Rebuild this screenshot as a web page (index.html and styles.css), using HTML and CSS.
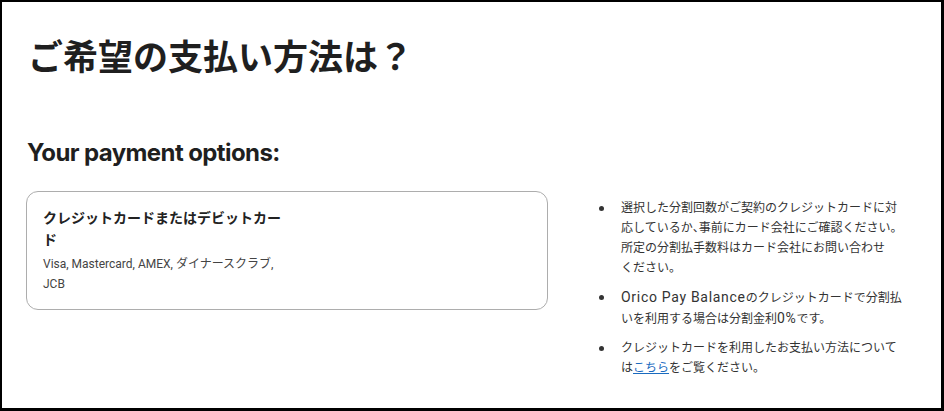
FILE: index.html
```html
<!DOCTYPE html>
<html lang="ja">
<head>
    <meta charset="UTF-8">
    <meta name="viewport" content="width=device-width, initial-scale=1.0">
    <title>お支払い方法</title>
    <link rel="stylesheet" href="styles.css">
</head>
<body>
    <div class="frame">
        <h1 class="titulo">ご希望の支払い方法は？</h1>

        <div class="colunas">
            <div class="esquerda">
                <h2 class="subtitulo">Your payment options:</h2>

                <div class="cartao">
                    <div class="cartao-texto">
                        <div class="cartao-nome">クレジットカードまたはデビットカード</div>
                        <div class="cartao-marcas">Visa, Mastercard, AMEX, ダイナースクラブ, JCB</div>
                    </div>
                </div>
            </div>

            <!-- avisos -->
            <ul class="avisos">
                <li><span>選択した分割回数がご契約のクレジットカードに対応しているか<span class="meio">、</span>事前にカード会社にご確認ください。所定の分割払手数料はカード会社にお問い合わせ<span class="junto">ください。</span></span></li>
                <li><span><span class="marca">Orico Pay Balance</span>のクレジットカードで分割払いを利用する場合は分割金利<span class="marca">0%</span>です。</span></li>
                <li><span>クレジットカードを利用したお支払い方法については<a href="#">こちら</a>をご覧ください。</span></li>
            </ul>
        </div>
    </div>
</body>
</html>
```

FILE: styles.css
```css
* {
    box-sizing: border-box;
}

body {
    margin: 0;
    background-color: white;
    color: #2b2b2b;
    font-family: Roboto, "Noto Sans CJK JP", sans-serif;
}

.frame {
    width: 944px;
    height: 411px;
    border: 2px solid black;
    border-right-width: 3px;
    border-bottom-width: 3px;
    padding-left: 24px;
    overflow: hidden;
}

.titulo {
    margin: 30px 0 0 2px;
    font-family: "Noto Sans CJK JP", sans-serif;
    font-size: 35px;
    line-height: 45px;
    font-weight: 700;
    color: #1f1f1f;
}

.colunas {
    display: flex;
    gap: 50px;
}

.esquerda {
    width: 522px;
}

.subtitulo {
    margin: 61px 0 0 1px;
    font-family: Inter, "Noto Sans CJK JP", sans-serif;
    font-size: 24px;
    line-height: 30px;
    font-weight: 700;
    letter-spacing: -0.6px;
    color: #1f1f1f;
}

.cartao {
    margin-top: 23px;
    height: 119px;
    border: 1px solid #adadad;
    border-radius: 12px;
    padding: 14px 16px;
}

.cartao-texto {
    width: 240px;
}

.cartao-nome {
    font-family: "Noto Sans CJK JP", sans-serif;
    font-size: 14px;
    line-height: 22px;
    font-weight: 700;
    color: #222;
}

.cartao-marcas {
    margin-top: 4px;
    font-size: 12px;
    line-height: 20px;
    color: #444;
}

.avisos {
    list-style: none;
    margin: 0;
    padding: 121px 0 0 0;
}

.avisos li {
    display: flex;
    width: 306px;
    margin-bottom: 9px;
    font-size: 12px;
    line-height: 20px;
    color: #333;
}

.avisos li::before {
    content: "";
    flex-shrink: 0;
    width: 5px;
    height: 5px;
    margin: 8px 17px 0 1px;
    border-radius: 50%;
    background-color: #333;
}

.marca {
    font-size: 14px;
    letter-spacing: 0.7px;
}

.meio {
    font-feature-settings: "halt";
}

.junto {
    white-space: nowrap;
}

.avisos a {
    color: #1a6bbf;
    text-decoration: underline;
}
```
